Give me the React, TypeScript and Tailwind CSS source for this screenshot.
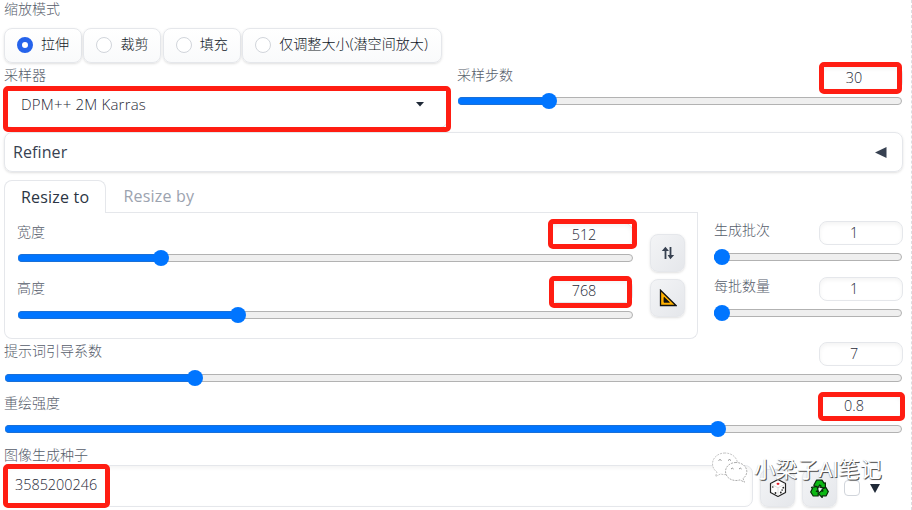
import React from "react";
import clsx from "clsx";

interface SliderProps {
  /** thumb centre, in px from the start of the track */
  value: number;
  className?: string;
}

const Slider: React.FC<SliderProps> = ({ value, className }) => (
  <div
    className={clsx(
      "relative h-2 rounded-full border border-[#b2b2b2] bg-[#efefef]",
      className,
    )}
  >
    <div
      className="absolute -left-px -top-px h-2 rounded-full border-y border-[#1a70d8] bg-[#0075ff]"
      style={{ width: value }}
    />
    <div
      className="absolute -top-[5px] h-4 w-4 rounded-full bg-[#0075ff]"
      style={{ left: value - 9 }}
    />
  </div>
);

const Label: React.FC<{ children: React.ReactNode; className?: string }> = ({
  children,
  className,
}) => (
  <span
    className={clsx(
      "block h-[18px] whitespace-nowrap text-[14px] leading-[18px] text-[#565d6b]",
      className,
    )}
  >
    {children}
  </span>
);

const NumberBox: React.FC<{ value: string }> = ({ value }) => (
  <div className="relative flex h-6 w-[84px] shrink-0 items-center justify-center rounded-lg border border-[#e5e7eb] bg-white pr-[14px] text-[14.4px] text-[#1f2937] shadow-[inset_0_2px_4px_rgba(0,0,0,0.05)]">
    {value}
  </div>
);

const Mark: React.FC<{ className: string }> = ({ className }) => (
  <div
    className={clsx(
      "pointer-events-none absolute z-10 rounded-[5px] border-[5px] border-[#ff1d12]",
      className,
    )}
  />
);

const ToolButton: React.FC<{ children: React.ReactNode }> = ({ children }) => (
  <button className="flex h-[38px] w-[35px] shrink-0 items-center justify-center rounded-lg border border-[#e5e7eb] bg-gradient-to-br from-[#f3f4f6] to-[#e5e7eb] shadow-sm">
    {children}
  </button>
);

const modes = [
  { name: "拉伸", width: "w-[78px]", checked: true },
  { name: "裁剪", width: "w-[78px]", checked: false },
  { name: "填充", width: "w-[78px]", checked: false },
  { name: "仅调整大小(潜空间放大)", width: "w-[200px]", checked: false },
];

const SwapIcon = () => (
  <svg width="14" height="14" viewBox="0 0 14 14" fill="#374151">
    <path d="M4.4 0.8 8 5H5.4V13H3.6V5H0.8Z" />
    <path d="M9.4 13.2 6.6 9H8.6V1H10.4V9H13.2Z" />
  </svg>
);

const TriangleIcon = () => (
  <svg width="18" height="18" viewBox="0 0 18 18">
    <path d="M1.5 1.2V16.5H17Z" fill="#ffb000" stroke="#111" strokeWidth="1.3" />
    <path d="M5 8.3V13.3H10.4Z" fill="#111" stroke="#111" strokeWidth=".8" />
  </svg>
);

const DiceIcon = () => (
  <svg width="18" height="20" viewBox="0 0 18 20">
    <path
      d="M9 1.5 16.5 5.5V14.5L9 18.5 1.5 14.5V5.5Z"
      fill="#fdfdfd"
      stroke="#222"
      strokeWidth="1.2"
      strokeLinejoin="round"
    />
    <path d="M2 6 9 9.8 16 6M9 10V18" fill="none" stroke="#d4d4d4" strokeWidth=".7" />
    <ellipse cx="9" cy="5.8" rx="1.5" ry="1.1" fill="#e11d2a" />
    <g fill="#222">
      <circle cx="3.8" cy="9" r=".8" />
      <circle cx="6.5" cy="15" r=".9" />
      <circle cx="11.8" cy="14.5" r=".9" />
      <circle cx="14.3" cy="9.7" r=".9" />
      <circle cx="13.1" cy="12.1" r=".8" />
    </g>
  </svg>
);

const RecycleIcon = () => (
  <svg width="19" height="19" viewBox="0 0 19 19">
    <g fill="#0cb814" stroke="#062b08" strokeWidth="1.2" strokeLinejoin="round">
      <path d="M6.5 1.2H12L14 4.2 15.4 3.8V9.2L9.8 8.2 11 7 9.6 6 7.8 9.3 3.8 6.3Z" />
      <path d="M12 10.2 15.8 8.4 18.3 12.6 16.2 16.8H12.2V18.5L8.4 14.6 12.2 10.8V12.3L13 12Z" />
      <path d="M1.5 8.4 7 7.4 8.4 12.6 6.8 11.8 6.4 12.5H8.2V17H3.2L.7 13 2.4 9.6Z" />
    </g>
  </svg>
);

const Watermark = () => (
  <div className="pointer-events-none absolute left-[711px] top-[451px] z-20 flex items-start">
    <svg
      width="38"
      height="34"
      viewBox="0 0 38 34"
      fill="#fff"
      stroke="#8a8a8a"
      strokeWidth=".7"
      strokeDasharray="2 1"
    >
      <path
        stroke="#aaa"
        d="M14 2C7 2 1.5 6.800 1.500 12.800c0 3.400 1.700 6.300 4.500 8.300L4.500 25.500 9.500 23c1.500.4 3 .6 4.500.6 7 0 12.500-4.800 12.500-10.800S21 2 14 2Z"
      />
      <path d="M25 11.500c-6 0-10.500 4-10.500 9s4.500 9 10.500 9c1.400 0 2.800-.2 4-.6l4.400 2.300-1.300-3.700c2.300-1.700 3.700-4.200 3.700-7 0-5-4.800-9-10.800-9Z" />
      <g fill="none" stroke="#666" strokeDasharray="none">
        <path d="M7.500 9.500q1.500-2 3 0M17 9.500q1.500-2 3 0M20 18q1.300-1.800 2.600 0M28 18q1.300-1.800 2.600 0" />
      </g>
    </svg>
    <span className="ml-[5px] mt-1 whitespace-nowrap text-[21.5px] font-normal leading-[28px] tracking-[0.1px] text-white [text-shadow:1px_1px_0_#555,0_1px_1px_#999]">
      小梁子AI笔记
    </span>
  </div>
);

export default function App() {
  return (
    <div className="relative h-[510px] w-[912px] overflow-hidden border-r border-dashed border-[#dcdee2] bg-white pl-1 font-['Open_Sans','Noto_Sans_CJK_SC',sans-serif] font-light text-[#1f2937]">
      {/* Resize mode */}
      <Label>缩放模式</Label>
      <div className="mt-[10px] flex gap-[1.4px]">
        {modes.map((mode) => (
          <div
            key={mode.name}
            className={clsx(
              "flex h-[35px] shrink-0 items-center rounded-lg border border-[#e5e7eb] bg-gradient-to-b from-white to-[#f9fafb] pb-px pl-3 text-[14.1px] text-[#111827] shadow-sm",
              mode.width,
            )}
          >
            <span
              className={clsx(
                "mr-2 h-4 w-4 shrink-0 rounded-full bg-white",
                mode.checked
                  ? "border-[5px] border-[#2563eb]"
                  : "border border-[#d1d5db]",
              )}
            />
            <span className="relative -top-px whitespace-nowrap">{mode.name}</span>
          </div>
        ))}
      </div>

      {/* Sampler and steps */}
      <div className="mt-[3px] flex h-[66px]">
        <div className="w-[453px]">
          <Label>采样器</Label>
          <div className="relative mt-[2px] flex h-[42px] w-[444px] items-center justify-between rounded-lg border border-[#e5e7eb] pb-[5px] pl-4 pr-[22px]">
            <span className="text-[15px] tracking-[0.2px]">DPM++ 2M Karras</span>
            <svg width="10" height="5" viewBox="0 0 10 5" fill="#1f2937">
              <path d="M1 0H9L5 4.5Z" />
            </svg>
            <Mark className="-bottom-[5px] -left-[2px] -right-[4px] -top-px" />
          </div>
        </div>
        <div className="w-[446px]">
          <div className="flex h-[31px] items-start justify-between">
            <Label>采样步数</Label>
            <div className="relative">
              <NumberBox value="30" />
              <Mark className="-bottom-[4px] left-0 right-[1px] -top-[4px]" />
            </div>
          </div>
          <Slider value={91} className="mx-px" />
        </div>
      </div>

      {/* Refiner */}
      <div className="flex h-10 w-[899px] items-center justify-between rounded-lg border border-[#e5e7eb] pl-2 pr-[15px] text-[16px] shadow-sm">
        <span className="font-normal tracking-[0.1px] text-[#374151]">Refiner</span>
        <svg width="12" height="11" viewBox="0 0 12 11" fill="#374151">
          <path d="M0 5.5 11.5 0V11Z" />
        </svg>
      </div>

      <div className="mt-2 flex">
        <div className="w-[694px]">
          <div className="flex h-[33px] text-[16px] font-normal tracking-[0.2px]">
            <div className="flex w-[102px] items-center rounded-t-lg border border-b-0 border-[#e5e7eb] pl-4 text-[#2b3544]">
              Resize to
            </div>
            <div className="flex flex-1 items-center border-b border-[#e5e7eb] pl-[17.5px] text-[#9ca3af]">
              Resize by
            </div>
          </div>
          <div className="flex h-[126px] rounded-b-lg border border-t-0 border-[#e5e7eb] pl-3">
            <div className="w-[616px] pt-[10px]">
              <div className="flex h-[31px] items-start justify-between">
                <Label>宽度</Label>
                <div className="relative">
                  <NumberBox value="512" />
                  <Mark className="-bottom-[2px] -left-px -right-[4px] -top-[4px]" />
                </div>
              </div>
              <Slider value={143} className="ml-px" />
              <div className="mt-[17px] flex h-[32px] items-start justify-between">
                <Label>高度</Label>
                <div className="relative">
                  <NumberBox value="768" />
                  <Mark className="-bottom-[5px] left-0 right-[1px] -top-[3px]" />
                </div>
              </div>
              <Slider value={220} className="ml-px" />
            </div>
            <div className="ml-[17px] flex flex-col gap-[7px] pt-[21px]">
              <ToolButton>
                <SwapIcon />
              </ToolButton>
              <ToolButton>
                <TriangleIcon />
              </ToolButton>
            </div>
          </div>
        </div>

        {/* Batch settings */}
        <div className="ml-4 flex w-[189px] flex-col gap-4 pt-[41px]">
          {["生成批次", "每批数量"].map((name) => (
            <div key={name}>
              <div className="flex h-8 justify-between">
                <Label>{name}</Label>
                <NumberBox value="1" />
              </div>
              <Slider value={8} className="mr-px" />
            </div>
          ))}
        </div>
      </div>

      {/* CFG and denoising */}
      <div className="mt-[3px] w-[899px]">
        <div className="flex h-8 justify-between">
          <Label>提示词引导系数</Label>
          <NumberBox value="7" />
        </div>
        <Slider value={190} className="mx-px" />
      </div>
      <div className="mt-3 w-[899px]">
        <div className="flex h-[31px] items-start justify-between">
          <Label>重绘强度</Label>
          <div className="relative">
            <NumberBox value="0.8" />
            <Mark className="-bottom-[3px] -left-px -right-[2px] -top-[2px]" />
          </div>
        </div>
        <Slider value={713} className="mx-px" />
      </div>

      {/* Seed */}
      <Label className="mt-[13px]">图像生成种子</Label>
      <div className="mt-px flex h-[42px]">
        <div className="relative flex w-[749px] items-center rounded-lg border border-[#e5e7eb] pb-[3px] pl-[10px] text-[14.4px] shadow-[inset_0_2px_4px_rgba(0,0,0,0.05)]">
          3585200246
          <Mark className="-bottom-[2px] -left-[2px] -top-[2px] w-[107px]" />
        </div>
        <div className="ml-[7px] flex items-center gap-[7px] pt-1">
          <ToolButton>
            <DiceIcon />
          </ToolButton>
          <ToolButton>
            <RecycleIcon />
          </ToolButton>
          <span className="h-4 w-4 rounded border border-[#d1d5db] bg-white" />
          <svg className="ml-[3px]" width="10" height="9" viewBox="0 0 10 9" fill="#1f2937">
            <path d="M0 0H10L5 9Z" />
          </svg>
        </div>
      </div>

      <Watermark />
    </div>
  );
}
